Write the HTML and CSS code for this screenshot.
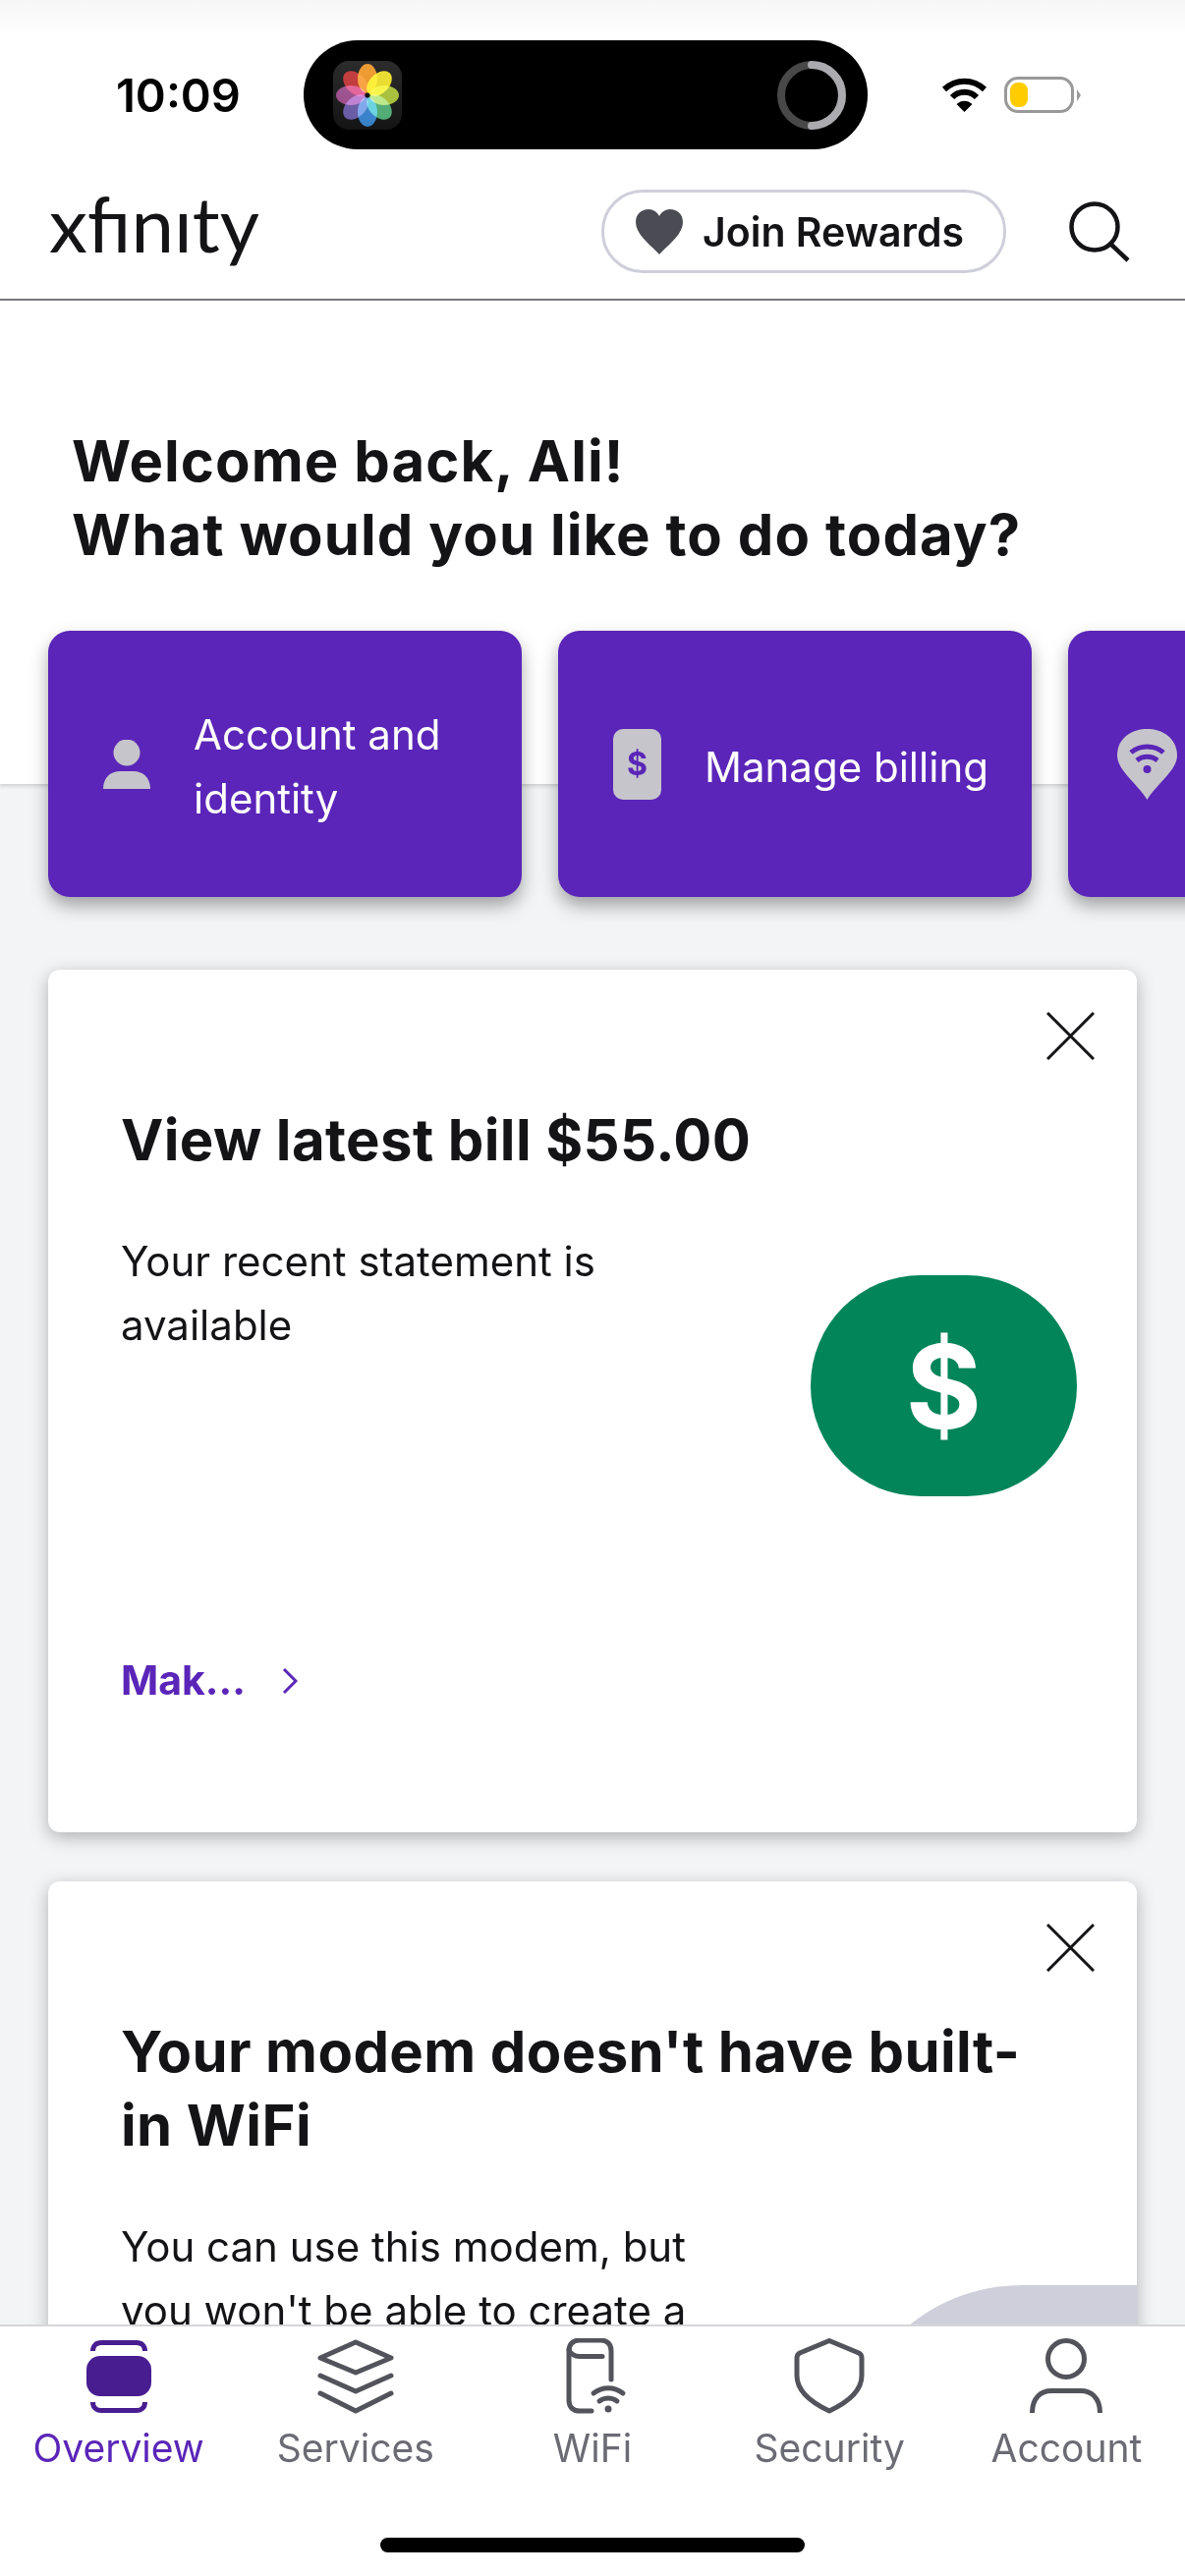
FILE: index.html
```html
<!DOCTYPE html>
<html lang="en">
<head>
  <meta charset="UTF-8">
  <title>Xfinity Overview</title>
  <link rel="stylesheet" href="styles.css">
</head>
<body>
<div class="phone">

  <!-- status bar -->
  <div class="status-bar">
    <div class="time">10:09</div>
    <div class="island">
      <div class="photos">
        <svg width="70" height="70" viewBox="0 0 70 70">
          <ellipse cx="35" cy="18" rx="10" ry="15" fill="#e8890c"/>
          <ellipse cx="35" cy="18" rx="10" ry="15" fill="#e6d60f" transform="rotate(45 35 35)"/>
          <ellipse cx="35" cy="18" rx="10" ry="15" fill="#9db824" transform="rotate(90 35 35)"/>
          <ellipse cx="35" cy="18" rx="10" ry="15" fill="#3fa366" transform="rotate(135 35 35)"/>
          <ellipse cx="35" cy="18" rx="10" ry="15" fill="#2576c4" transform="rotate(180 35 35)"/>
          <ellipse cx="35" cy="18" rx="10" ry="15" fill="#5a4a9c" transform="rotate(225 35 35)"/>
          <ellipse cx="35" cy="18" rx="10" ry="15" fill="#8f3a7e" transform="rotate(270 35 35)"/>
          <ellipse cx="35" cy="18" rx="10" ry="15" fill="#b81c1c" transform="rotate(315 35 35)"/>
          <circle cx="35" cy="35" r="2.5" fill="#111"/>
        </svg>
      </div>
      <svg class="ring" width="72" height="72" viewBox="0 0 72 72">
        <circle cx="36" cy="36" r="31" fill="none" stroke="#484848" stroke-width="8"/>
        <path d="M36 5 A31 31 0 0 1 36 67" fill="none" stroke="#aaaaaf" stroke-width="8" stroke-linecap="round"/>
      </svg>
    </div>
    <svg class="wifi" width="47" height="35" viewBox="0 0 47 35">
      <path d="M3 12 C15 1 32 1 44 12" fill="none" stroke="#000" stroke-width="6"/>
      <path d="M11 20 C18 13 29 13 36 20" fill="none" stroke="#000" stroke-width="6"/>
      <path d="M15.5 27 C20 22.5 27 22.5 31.5 27 L23.5 35 Z" fill="#000"/>
    </svg>
    <div class="battery"><div class="battery-fill"></div></div>
    <div class="battery-nub"></div>
  </div>

  <!-- top header -->
  <header class="top-header">
    <div class="logo">xfınıty</div>
    <div class="rewards">
      <svg width="48" height="46" viewBox="0 0 48 46">
        <path d="M24 46 C15 36 0 26 0 13 C0 5 6 0 13 0 C18 0 22 3 24 7 C26 3 30 0 35 0 C42 0 48 5 48 13 C48 26 33 36 24 46 Z" fill="#4b4b54"/>
      </svg>
      <span>Join Rewards</span>
    </div>
    <svg class="search" width="62" height="62" viewBox="0 0 62 62">
      <circle cx="26" cy="26" r="23.5" fill="none" stroke="#141417" stroke-width="4.5"/>
      <path d="M42 43 L60 60" stroke="#141417" stroke-width="4.5"/>
    </svg>
  </header>

  <div class="main">
    <section class="hero">
      <h1>Welcome back, Ali!<br>What would you like to do today?</h1>
    </section>

    <div class="tiles">
      <div class="tile">
        <svg class="tile-icon" width="48" height="50" viewBox="0 0 48 50">
          <ellipse cx="24" cy="13" rx="13.5" ry="13.5" fill="#c6c5cb"/>
          <path d="M0 50 C0 38 8 32 17 32 H31 C40 32 48 38 48 50 Z" fill="#c6c5cb"/>
        </svg>
        <span>Account and identity</span>
      </div>
      <div class="tile">
        <div class="bill-icon">$</div>
        <span>Manage billing</span>
      </div>
      <div class="tile tile-wifi">
        <svg width="61" height="72" viewBox="0 0 61 72">
          <path d="M30.5 72 C20 55 0 42 0 27 C0 10 14 0 30.5 0 C47 0 61 10 61 27 C61 42 41 55 30.5 72 Z" fill="#c6c5cb"/>
          <path d="M14 24 C23 16 38 16 47 24" fill="none" stroke="#5a25b8" stroke-width="5"/>
          <path d="M20 32 C26 27 35 27 41 32" fill="none" stroke="#5a25b8" stroke-width="5"/>
          <circle cx="30.5" cy="41" r="4" fill="#5a25b8"/>
        </svg>
      </div>
    </div>

    <div class="card">
      <svg class="close" width="49" height="49" viewBox="0 0 49 49">
        <path d="M1 1 L48 48 M48 1 L1 48" stroke="#141417" stroke-width="3"/>
      </svg>
      <h2>View latest bill $55.00</h2>
      <div class="card-body">
        <p>Your recent statement is available</p>
        <div class="art art-bill">$</div>
      </div>
      <a class="card-link">
        <span>Mak...</span>
        <svg width="16" height="28" viewBox="0 0 16 28">
          <path d="M2 2 L14 14 L2 26" fill="none" stroke="#5a25b8" stroke-width="3"/>
        </svg>
      </a>
    </div>

    <div class="card">
      <svg class="close" width="49" height="49" viewBox="0 0 49 49">
        <path d="M1 1 L48 48 M48 1 L1 48" stroke="#141417" stroke-width="3"/>
      </svg>
      <h2>Your modem doesn't have built-in WiFi</h2>
      <div class="card-body">
        <p>You can use this modem, but you won't be able to create a</p>
        <div class="art art-modem"></div>
      </div>
    </div>
  </div>

  <!-- bottom tabs -->
  <nav class="tab-bar">
    <div class="tabs">
      <div class="tab active">
        <svg width="80" height="80" viewBox="0 0 80 80">
          <rect x="7" y="18" width="66" height="41" rx="14" fill="#471d90"/>
          <path d="M13.5 13 C13.5 7.5 17 4.5 22 4.5 H58 C63 4.5 66.5 7.5 66.5 13" fill="none" stroke="#471d90" stroke-width="5"/>
          <path d="M13.5 65 C13.5 70.5 17 73.5 22 73.5 H58 C63 73.5 66.5 70.5 66.5 65" fill="none" stroke="#471d90" stroke-width="5"/>
        </svg>
        <span>Overview</span>
      </div>
      <div class="tab">
        <svg width="80" height="80" viewBox="0 0 80 80">
          <g fill="none" stroke="#53535c" stroke-width="5" stroke-linejoin="round" stroke-linecap="round">
            <path d="M4 20 L40 4 L76 20 L40 35 Z"/>
            <path d="M4 38 L40 54 L76 38"/>
            <path d="M4 56 L40 74 L76 56"/>
          </g>
        </svg>
        <span>Services</span>
      </div>
      <div class="tab">
        <svg width="80" height="80" viewBox="0 0 80 80">
          <g fill="none" stroke="#53535c" stroke-width="5" stroke-linecap="round">
            <path d="M59 42 V13 C59 6 55 2 48 2 H27 C20 2 16 6 16 13 V63 C16 70 20 74 27 74 H39"/>
            <path d="M16 12 C18 16 22 18.5 27 18.5 H50"/>
            <path d="M41 56 C50 49 62 49 71 56"/>
            <path d="M47 64 C52 60 60 60 65 64"/>
          </g>
          <circle cx="56" cy="72" r="3.5" fill="#53535c"/>
        </svg>
        <span>WiFi</span>
      </div>
      <div class="tab">
        <svg width="80" height="80" viewBox="0 0 80 80">
          <path d="M40 2.5 L70 15 C72 16 73 17.5 73 20 V38 C73 56 55 67 40 74 C25 67 7 56 7 38 V20 C7 17.5 8 16 10 15 Z" fill="none" stroke="#53535c" stroke-width="5" stroke-linejoin="round"/>
        </svg>
        <span>Security</span>
      </div>
      <div class="tab">
        <svg width="80" height="80" viewBox="0 0 80 80">
          <circle cx="40" cy="21" r="18.5" fill="none" stroke="#53535c" stroke-width="5"/>
          <path d="M5.5 76 C5.5 60 15 53.5 25 53.5 H55 C65 53.5 74.5 60 74.5 76" fill="none" stroke="#53535c" stroke-width="5"/>
        </svg>
        <span>Account</span>
      </div>
    </div>
    <div class="home-indicator"></div>
  </nav>

</div>
</body>
</html>
```

FILE: styles.css
```css
/* page frame */
body {
  margin: 0;
  font-family: Inter, "Open Sans", sans-serif;
  color: #141417;
}

.phone {
  width: 1206px;
  height: 2622px;
  display: flex;
  flex-direction: column;
  overflow: hidden;
  background: #f2f4f6;
}

/* status bar */
.status-bar {
  flex: none;
  height: 111px;
  padding: 41px 0 0 118px;
  display: flex;
  align-items: center;
  background: linear-gradient(#f6f6f6, #fff 36px);
}

.time {
  width: 191px;
  font-size: 47px;
  font-weight: 600;
  color: #000;
}

.island {
  width: 574px;
  height: 111px;
  box-sizing: border-box;
  padding: 0 21px 0 30px;
  display: flex;
  align-items: center;
  justify-content: space-between;
  background: #000;
  border-radius: 55px;
}

.photos {
  width: 70px;
  height: 70px;
  border-radius: 16px;
  background: linear-gradient(#2c2c2c, #141414);
}

.photos svg,
.ring {
  display: block;
}

/* overlapping petals get brighter, like the real icon */
.photos ellipse {
  mix-blend-mode: screen;
}

.wifi {
  margin-left: 75px;
}

.battery {
  width: 71px;
  height: 37px;
  margin-left: 17px;
  box-sizing: border-box;
  padding: 3px 0 0 3px;
  border: 3px solid #999;
  border-radius: 14px;
}

.battery-fill {
  width: 18px;
  height: 25px;
  background: #ffcc00;
  border-radius: 8px;
}

.battery-nub {
  width: 0;
  height: 0;
  margin-left: 3px;
  border-left: 4px solid #999;
  border-top: 6px solid transparent;
  border-bottom: 6px solid transparent;
}

/* header */
.top-header {
  flex: none;
  height: 85px;
  padding: 41px 56px 26px 50px;
  display: flex;
  align-items: center;
  background: #fff;
  border-bottom: 2px solid #77777c;
}

.logo {
  height: 74px;
  overflow: hidden;
  font-family: Lato, sans-serif;
  font-size: 78px;
  line-height: 56px;
  color: #141417;
}

.rewards {
  margin-left: auto;
  width: 412px;
  height: 85px;
  box-sizing: border-box;
  padding-left: 32px;
  display: flex;
  align-items: center;
  gap: 20px;
  border: 3px solid #cfcfdc;
  border-radius: 42px;
  font-size: 41px;
  font-weight: 600;
}

.search {
  margin-left: 64px;
}

/* main content */
.main {
  flex: 1;
  min-height: 0;
  overflow: hidden;
}

.hero {
  padding: 126px 0 216px 73px;
  background: #fff;
  box-shadow: 0 2px 4px rgba(0, 0, 0, 0.16);
}

.hero h1 {
  margin: 0;
  font-size: 58px;
  line-height: 75px;
  font-weight: 700;
  letter-spacing: 1.1px;
}

.tiles {
  position: relative;
  margin-top: -156px;
  padding-left: 49px;
  display: flex;
  gap: 37px;
}

.tile {
  flex: none;
  width: 482px;
  height: 271px;
  box-sizing: border-box;
  padding: 0 30px 0 56px;
  display: flex;
  align-items: center;
  gap: 44px;
  background: #5a25b8;
  border-radius: 22px;
  box-shadow: 0 9px 18px rgba(0, 0, 0, 0.34);
  font-size: 42px;
  line-height: 65px;
  color: #fff;
}

.tile span {
  padding-top: 5px;
}

.tile-icon {
  flex: none;
}

.tile-wifi {
  padding-left: 50px;
}

.bill-icon {
  flex: none;
  width: 49px;
  height: 72px;
  display: flex;
  align-items: center;
  justify-content: center;
  background: #c6c5cb;
  border-radius: 10px;
  font-size: 32px;
  font-weight: 700;
  color: #5a25b8;
}

/* cards */
.card {
  position: relative;
  margin: 74px 49px 0;
  padding: 136px 61px 0 74px;
  min-height: 742px;
  overflow: hidden;
  background: #fff;
  border-radius: 12px;
  box-shadow: 0 5px 18px rgba(0, 0, 0, 0.28);
}

.card + .card {
  margin-top: 50px;
}

.close {
  position: absolute;
  top: 43px;
  right: 43px;
}

.card h2 {
  max-width: 950px;
  margin: 0 0 52px;
  font-size: 58px;
  line-height: 75px;
  font-weight: 700;
  letter-spacing: 0.4px;
}

.card-body {
  display: flex;
  justify-content: space-between;
}

.card-body p {
  width: 600px;
  margin: 0;
  padding-top: 1px;
  font-size: 42px;
  line-height: 65px;
}

.art {
  flex: none;
}

.art-bill {
  width: 271px;
  height: 225px;
  margin-top: 48px;
  display: flex;
  align-items: center;
  justify-content: center;
  background: #03855a;
  border-radius: 112px;
  font-size: 118px;
  font-weight: 700;
  color: #fff;
}

.art-modem {
  width: 700px;
  height: 400px;
  margin: 73px -462px 0 -400px;
  background: #cfcfdb;
  border-radius: 182px;
}

.card-link {
  margin-top: 155px;
  display: flex;
  align-items: center;
  gap: 37px;
  font-size: 41px;
  line-height: 65px;
  font-weight: 700;
  color: #5a25b8;
}

/* bottom tabs */
.tab-bar {
  flex: none;
  position: relative;
  height: 254px;
  background: #fff;
  border-top: 2px solid #d6d6da;
}

.tabs {
  padding-top: 12px;
  display: grid;
  grid-template-columns: repeat(5, 1fr);
}

.tab {
  display: flex;
  flex-direction: column;
  align-items: center;
  font-size: 39px;
  line-height: 48px;
  color: #6b6b74;
}

.tab span {
  margin-top: 8px;
}

.tab.active {
  color: #5a25b8;
}

.home-indicator {
  width: 432px;
  height: 15px;
  margin: 67px auto 0;
  background: #000;
  border-radius: 8px;
}
```
